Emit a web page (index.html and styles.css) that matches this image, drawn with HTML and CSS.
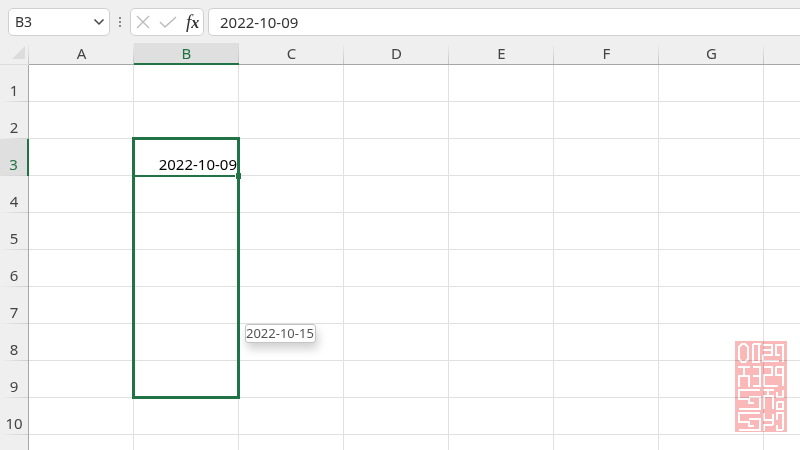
FILE: index.html
```html
<!DOCTYPE html>
<html lang="en">
<head>
<meta charset="utf-8">
<title>Workbook</title>
<link rel="stylesheet" href="styles.css">
</head>
<body>
<header class="formula-bar">
  <div class="name-box">
    <input class="name-input" aria-label="Name box" value="B3">
    <button class="icon-button" aria-label="Open name list"><svg width="12" height="8" viewBox="0 0 12 8"><path d="M1.500 1.500 6 6l4.500-4.500" fill="none" stroke="#444" stroke-width="1.500"/></svg></button>
  </div>
  <svg class="grip" width="4" height="14" viewBox="0 0 4 14" fill="#888"><path d="M1 2h2v2H1zM1 6h2v2H1zM1 10h2v2H1z"/></svg>
  <div class="actions">
    <button class="icon-button" aria-label="Cancel"><svg width="14" height="14" viewBox="0 0 14 14"><path d="m1 1 12 12M13 1 1 13" fill="none" stroke="#bbb" stroke-width="1.300"/></svg></button>
    <button class="icon-button" aria-label="Enter"><svg width="18" height="14" viewBox="0 0 18 14"><path d="m1 7 5 5L17 2" fill="none" stroke="#bbb" stroke-width="1.400"/></svg></button>
    <button class="icon-button fx" aria-label="Insert function">f<span class="fx-x">x</span></button>
  </div>
  <input class="formula-input" aria-label="Formula" value="2022-10-09">
</header>
<main class="sheet">
  <table class="grid">
    <thead>
      <tr><th class="corner"><svg width="14" height="14" viewBox="0 0 14 14"><path d="M13 0v13H0z" fill="#dcdcdc"/></svg></th><th>A</th><th class="active">B</th><th>C</th><th>D</th><th>E</th><th>F</th><th>G</th><th class="rest"></th></tr>
    </thead>
    <tbody>
      <tr><th>1</th><td></td><td></td><td></td><td></td><td></td><td></td><td></td><td></td></tr>
      <tr><th>2</th><td></td><td></td><td></td><td></td><td></td><td></td><td></td><td></td></tr>
      <tr><th class="active">3</th><td></td><td class="selected">2022-10-09<span class="fill-range"></span><span class="cell-edge"></span><span class="fill-handle"></span><span class="fill-tip">2022-10-15</span></td><td></td><td></td><td></td><td></td><td></td><td></td></tr>
      <tr><th>4</th><td></td><td></td><td></td><td></td><td></td><td></td><td></td><td></td></tr>
      <tr><th>5</th><td></td><td></td><td></td><td></td><td></td><td></td><td></td><td></td></tr>
      <tr><th>6</th><td></td><td></td><td></td><td></td><td></td><td></td><td></td><td></td></tr>
      <tr><th>7</th><td></td><td></td><td></td><td></td><td></td><td></td><td></td><td></td></tr>
      <tr><th>8</th><td></td><td></td><td></td><td></td><td></td><td></td><td></td><td></td></tr>
      <tr><th>9</th><td></td><td></td><td></td><td></td><td></td><td></td><td></td><td></td></tr>
      <tr><th>10</th><td></td><td></td><td></td><td></td><td></td><td></td><td></td><td></td></tr>
      <tr><th></th><td></td><td></td><td></td><td></td><td></td><td></td><td></td><td></td></tr>
    </tbody>
  </table>
</main>
<svg class="seal" width="52" height="92" viewBox="0 0 52 92">
  <path d="M0 0h52v91H0z" fill="#fbb8b8"/>
  <g fill="none" stroke="#fff" stroke-width="2">
    <path d="M7 3h3l3 3v12l-3 3H7l-3-3V6z"/>
    <path d="M18 3v18h7M18 3h8M24 3v18M28 4h9v5h-9M28 14h9v-5M28 14v6h16M41 9V4h7v17M41 9v5h4"/>
    <path d="M3 26h12M9 26v9M4 46V35h10v11M18 26h7v19h-7M18 35h7M29 26h8v8h-8v11h14M41 26h7v19M41 26v8h7"/>
    <path d="M25 49H4v9h10v4h5M14 56h11v12H4M28 49h11M33 49v6M29 68V55h9v13M48 49v7h-6v-5M42 61h6v7h-6v-7"/>
    <path d="M25 72H4v9h10v4h5M14 78h11v11H4M29 72v7h9v-6M29 90v-6h9M38 79v5M48 89V72h-6v7M42 84v5h6"/>
  </g>
</svg>
</body>
</html>
```
FILE: styles.css
```css
* { box-sizing: border-box; }
body {
  margin: 0;
  height: 100vh;
  overflow: hidden;
  position: relative;
  background: #efefef;
  color: #444;
  font: 15px/20px "Noto Sans", "Open Sans", sans-serif;
}
input, button { font: inherit; color: #333; border: 0; background: none; padding: 0; margin: 0; }
.formula-bar { display: flex; align-items: center; padding: 8px 0 7px 8px; }
.name-box, .actions, .formula-input {
  height: 28px;
  background: #fff;
  border: 1px solid #d0d0d0;
  border-radius: 5px;
}
.name-box { display: flex; align-items: center; width: 102px; padding: 0 4px 0 6px; }
.name-input { flex: 1; min-width: 0; font-size: 14px; }
.icon-button { display: flex; align-items: center; justify-content: center; }
.grip { margin: 0 8px; }
.actions { display: flex; align-items: center; gap: 9px; width: 74px; padding: 0 5px; }
.fx { font: italic 19px/20px "Liberation Serif", serif; align-items: baseline; }
.fx-x { font-size: 16px; font-weight: 700; }
.formula-input { flex: 1; min-width: 0; margin-left: 4px; padding: 0 11px; border-right: 0; border-radius: 5px 0 0 5px; }
.grid { table-layout: fixed; border-collapse: separate; border-spacing: 0; width: 100%; }
.grid th { font-weight: 400; padding: 0 0 1px; text-align: center; }
.grid thead th {
  width: 105px;
  height: 22px;
  border-bottom: 1px solid #a6a6a6;
  background: linear-gradient(to bottom, transparent, #c4c4c4) right / 1px 100% no-repeat;
}
.grid thead .corner { width: 29px; line-height: 0; padding-left: 9px; border-bottom-color: #dcdcdc; }
.grid thead .rest { width: auto; background: none; }
.grid thead .active {
  padding: 0;
  background-color: #dfdfdf;
  color: #217346;
  border-bottom: 2px solid #217346;
}
.grid tbody th {
  height: 37px;
  vertical-align: bottom;
  padding-bottom: 2px;
  border-right: 1px solid #a6a6a6;
  background: linear-gradient(to right, transparent, #cecece) bottom / 100% 1px no-repeat;
}
.grid tbody .active { background-color: #dfdfdf; color: #217346; border-right: 2px solid #217346; }
.grid td {
  padding: 0 1px 1px 0;
  background: #fff;
  border-right: 1px solid #e0e0e0;
  border-bottom: 1px solid #e0e0e0;
  text-align: right;
  vertical-align: bottom;
  color: #000;
}
.grid td:last-child { border-right: 0; }
.grid .selected { position: relative; }
.fill-range { position: absolute; z-index: 1; top: -2px; left: -2px; width: 108px; height: 262px; border: 3px solid #217346; }
.cell-edge { position: absolute; z-index: 1; left: 0; right: 3px; bottom: -2px; height: 2px; background: #217346; }
.fill-handle { position: absolute; z-index: 2; right: -3px; bottom: -4px; width: 6px; height: 6px; background: #217346; border: solid #fff; border-width: 0 0 0 1px; }
.fill-tip {
  position: absolute;
  z-index: 2;
  left: 111px;
  top: 185px;
  padding: 0 1px 0 0;
  background: #fff;
  border: 1px solid #c4c4c4;
  border-radius: 3px;
  box-shadow: 2px 6px 10px rgba(0, 0, 0, 0.18);
  color: #555;
  font-size: 13px;
  line-height: 17px;
  white-space: nowrap;
}
.seal { position: absolute; right: 13px; bottom: 17px; mix-blend-mode: multiply; }
```
